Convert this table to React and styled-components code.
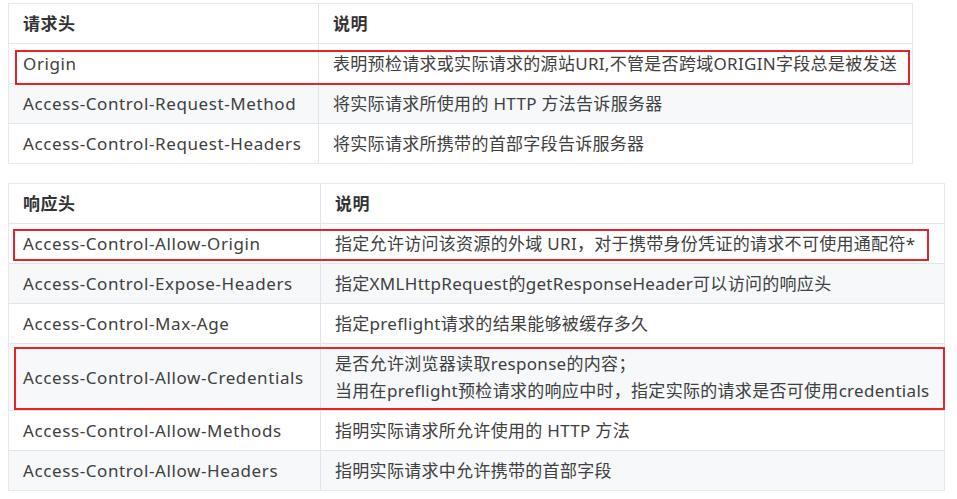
import React from 'react'
import styled, { createGlobalStyle } from 'styled-components'

const GlobalStyle = createGlobalStyle`
    body {
        margin: 0;
        background: #ffffff;
        font-family: "Noto Sans", "Noto Sans CJK SC", sans-serif;
    }
`

const requestRows = [
    { name: 'Origin', desc: ['表明预检请求或实际请求的源站URI,不管是否跨域ORIGIN字段总是被发送'], mark: { top: 6, right: 2, bottom: -2, left: 6 } },
    { name: 'Access-Control-Request-Method', desc: ['将实际请求所使用的 HTTP 方法告诉服务器'] },
    { name: 'Access-Control-Request-Headers', desc: ['将实际请求所携带的首部字段告诉服务器'] },
]

const responseRows = [
    { name: 'Access-Control-Allow-Origin', desc: ['指定允许访问该资源的外域 URI，对于携带身份凭证的请求不可使用通配符*'], mark: { top: 5, right: 15, bottom: 2, left: 4 } },
    { name: 'Access-Control-Expose-Headers', desc: ['指定XMLHttpRequest的getResponseHeader可以访问的响应头'] },
    { name: 'Access-Control-Max-Age', desc: ['指定preflight请求的结果能够被缓存多久'] },
    {
        name: 'Access-Control-Allow-Credentials',
        desc: ['是否允许浏览器读取response的内容；', '当用在preflight预检请求的响应中时，指定实际的请求是否可使用credentials'],
        mark: { top: 3, right: -1, bottom: 0, left: 5 },
    },
    { name: 'Access-Control-Allow-Methods', desc: ['指明实际请求所允许使用的 HTTP 方法'] },
    { name: 'Access-Control-Allow-Headers', desc: ['指明实际请求中允许携带的首部字段'] },
]

function HeaderTable({ title, rows, width, firstCol }) {
    return (
        <Table $width={width}>
            <Row $cols={firstCol}>
                <HeadCell>{title}</HeadCell>
                <HeadCell>说明</HeadCell>
            </Row>
            {rows.map((row, i) => (
                <Row key={row.name} $cols={firstCol} $striped={i % 2 === 1} $mark={row.mark}>
                    <Cell $spacing={0.6}>{row.name}</Cell>
                    <Cell $spacing={0.3}>
                        {row.desc.map((line) => (
                            <Line key={line}>{line}</Line>
                        ))}
                    </Cell>
                </Row>
            ))}
        </Table>
    )
}

function App() {
    return (
        <>
            <GlobalStyle />
            <Page>
                <HeaderTable title="请求头" rows={requestRows} width={905} firstCol={310} />
                <HeaderTable title="响应头" rows={responseRows} width={937} firstCol={312} />
            </Page>
        </>
    )
}

const Page = styled.div`
    padding: 3px 0 0 8px;
    display: flex;
    flex-direction: column;
    gap: 19px;
`

const Table = styled.div`
    width: ${(p) => p.$width}px;
    display: flex;
    flex-direction: column;
    border: 1px solid #e6e8eb;
    box-sizing: border-box;
    color: #404040;
    font-size: 17px;
`

const Row = styled.div`
    position: relative;
    display: grid;
    grid-template-columns: ${(p) => p.$cols - 1}px 1fr;
    background: ${(p) => (p.$striped ? '#f6f8fa' : '#ffffff')};
    & + & {
        border-top: 1px solid #e1e4e8;
    }
    ${(p) =>
        p.$mark &&
        `
        &::after {
            content: '';
            position: absolute;
            z-index: 1;
            top: ${p.$mark.top}px;
            right: ${p.$mark.right}px;
            bottom: ${p.$mark.bottom}px;
            left: ${p.$mark.left}px;
            border: 2px solid #e5232c;
            pointer-events: none;
        }
    `}
`

const Cell = styled.div`
    padding: 6px 14px;
    line-height: 27px;
    letter-spacing: ${(p) => p.$spacing ?? 0.45}px;
    display: flex;
    flex-direction: column;
    justify-content: center;
    white-space: nowrap;
    & + & {
        border-left: 1px solid #e1e4e8;
    }
`

const HeadCell = styled(Cell)`
    font-weight: 700;
    color: #333;
`

const Line = styled.span`
    display: block;
`

export default App
